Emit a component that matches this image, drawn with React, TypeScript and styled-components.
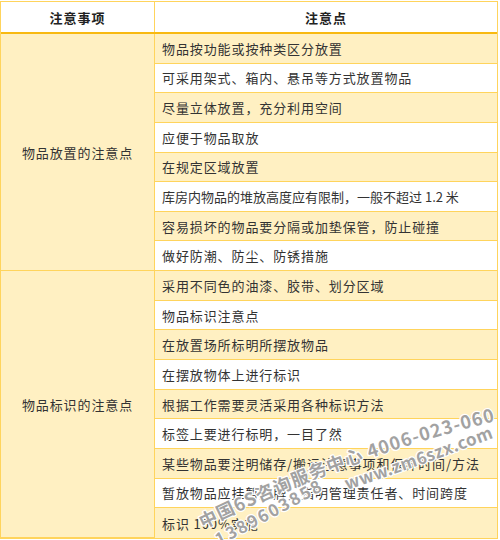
import styled, { createGlobalStyle } from "styled-components";

const GlobalStyle = createGlobalStyle`
    html, body {
        margin: 0;
        padding: 0;
        background: #fff;
    }
    body {
        font-family: "Noto Sans CJK SC", "Noto Sans", sans-serif;
        color: #333;
    }
`;

const BORDER = "#ffd45c";
const FILL = "#fff0c2";

const Page = styled.div`
    position: relative;
    width: 500px;
    height: 540px;
    padding-top: 1px;
    box-sizing: border-box;
    overflow: hidden;
`;

const Table = styled.div`
    width: 498px;
    border: 1px solid ${BORDER};
    box-sizing: border-box;
`;

const HeaderRow = styled.div`
    display: grid;
    grid-template-columns: 154px 1fr;
    height: 30px;
    border-bottom: 2px solid #f8b911;
    background: #fff;
`;

const HeaderCell = styled.div<{ $divider?: boolean }>`
    display: flex;
    align-items: center;
    justify-content: center;
    font-size: 13px;
    font-weight: 700;
    letter-spacing: 1px;
    color: #222;
    border-right: ${(p) => (p.$divider ? `1px solid ${BORDER}` : "none")};
`;

const Section = styled.div<{ $rows: number }>`
    display: grid;
    grid-template-columns: 154px 1fr;
    grid-template-rows: repeat(${(p) => p.$rows}, 29.65px);
`;

const GroupCell = styled.div<{ $rows: number }>`
    grid-row: 1 / span ${(p) => p.$rows};
    display: flex;
    align-items: center;
    justify-content: center;
    background: ${FILL};
    border-right: 1px solid ${BORDER};
    border-bottom: 1px solid ${BORDER};
    font-size: 13px;
    letter-spacing: 0.9px;
`;

const ItemCell = styled.div<{ $shaded: boolean; $last?: boolean; $tight?: boolean }>`
    grid-column: 2;
    display: flex;
    align-items: center;
    padding-left: 7px;
    background: ${(p) => (p.$shaded ? FILL : "#fff")};
    border-bottom: ${(p) => (p.$last ? "none" : `1px solid ${BORDER}`)};
    font-size: 13px;
    letter-spacing: ${(p) => (p.$tight ? "0" : "0.9px")};
    white-space: nowrap;
`;

const Watermark = styled.svg`
    position: absolute;
    inset: 0;
    pointer-events: none;
`;

const MarkText = styled.text`
    font-family: "Noto Sans CJK SC", "Liberation Sans", sans-serif;
    font-weight: 700;
    fill: #a2a2a2;
    stroke: #fff;
    stroke-width: 2.4px;
    paint-order: stroke;
    stroke-linejoin: round;
`;

type Item = { text: string; tight?: boolean };

const groups: { title: string; items: Item[] }[] = [
    {
        title: "物品放置的注意点",
        items: [
            { text: "物品按功能或按种类区分放置" },
            { text: "可采用架式、箱内、悬吊等方式放置物品" },
            { text: "尽量立体放置，充分利用空间" },
            { text: "应便于物品取放" },
            { text: "在规定区域放置" },
            { text: "库房内物品的堆放高度应有限制，一般不超过 1.2 米", tight: true },
            { text: "容易损坏的物品要分隔或加垫保管，防止碰撞" },
            { text: "做好防潮、防尘、防锈措施" },
        ],
    },
    {
        title: "物品标识的注意点",
        items: [
            { text: "采用不同色的油漆、胶带、划分区域" },
            { text: "物品标识注意点" },
            { text: "在放置场所标明所摆放物品" },
            { text: "在摆放物体上进行标识" },
            { text: "根据工作需要灵活采用各种标识方法" },
            { text: "标签上要进行标明，一目了然" },
            { text: "某些物品要注明储存/搬运注意事项和保养时间/方法" },
            { text: "暂放物品应挂暂放牌，指明管理责任者、时间跨度" },
            { text: "标识 100%实施" },
        ],
    },
];

export default function App() {
    let index = 0;
    return (
        <Page>
            <GlobalStyle />
            <Table>
                <HeaderRow>
                    <HeaderCell $divider>注意事项</HeaderCell>
                    <HeaderCell>注意点</HeaderCell>
                </HeaderRow>
                {groups.map((group, g) => (
                    <Section key={group.title} $rows={group.items.length}>
                        <GroupCell $rows={group.items.length}>{group.title}</GroupCell>
                        {group.items.map((item, i) => {
                            const shaded = index % 2 === 0;
                            index++;
                            const last = g === groups.length - 1 && i === group.items.length - 1;
                            return (
                                <ItemCell key={item.text} $shaded={shaded} $last={last} $tight={item.tight}>
                                    {item.text}
                                </ItemCell>
                            );
                        })}
                    </Section>
                ))}
            </Table>
            <Watermark width="500" height="540" viewBox="0 0 500 540">
                <defs>
                    <path id="wm-line1" d="M203,529 Q352,455 508,418" />
                    <path id="wm-line2" d="M347,490 Q420,466 503,434" />
                    <path id="wm-line3" d="M219,546 Q280,514 338,482" />
                </defs>
                <MarkText fontSize="18">
                    <textPath href="#wm-line1" textLength="312" lengthAdjust="spacing">
                        中国6S咨询服务中心 4006-023-060
                    </textPath>
                </MarkText>
                <MarkText fontSize="17">
                    <textPath href="#wm-line2" textLength="156" lengthAdjust="spacing">
                        www.zm6szx.com
                    </textPath>
                </MarkText>
                <MarkText fontSize="17">
                    <textPath href="#wm-line3" textLength="118" lengthAdjust="spacing">
                        1389603858
                    </textPath>
                </MarkText>
            </Watermark>
        </Page>
    );
}
